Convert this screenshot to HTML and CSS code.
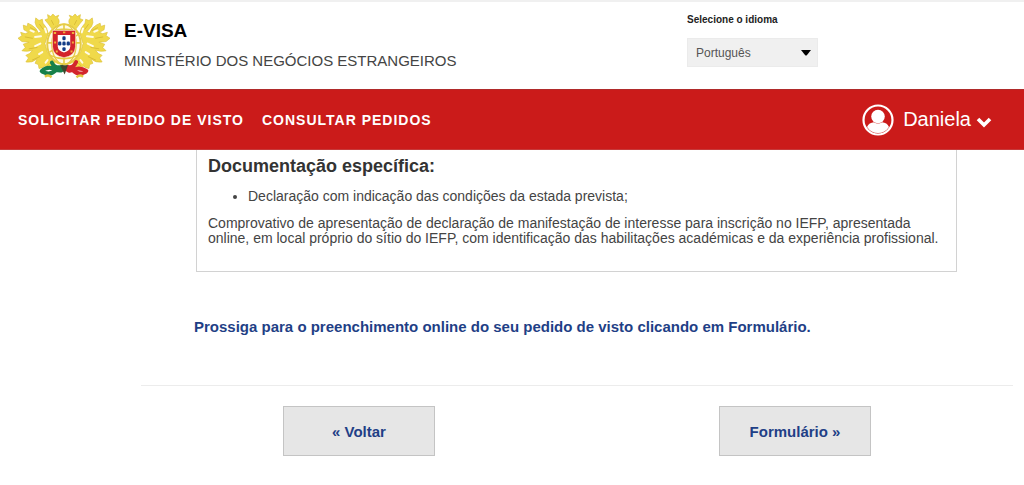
FILE: index.html
```html
<!DOCTYPE html>
<html lang="pt">
<head>
<meta charset="utf-8">
<meta name="viewport" content="width=device-width, initial-scale=1">
<title>E-VISA</title>
<link rel="stylesheet" href="styles.css">
</head>
<body>
<header class="top">
  <div class="brand">
    <svg class="emblem" viewBox="22 36 280 202" role="img" aria-label="Armas de Portugal">
      <defs>
        <g id="branch" stroke="#dcc03a" stroke-width="2" stroke-linejoin="round" stroke-linecap="round">
          <path fill="#f0d94a" d="M146 68 Q150 56 142 50 L146 42 L136 46 L128 38 L122 46 L112 40 L114 52 L104 56 L114 68 L126 84 L114 98 Q112 80 98 66 L96 54 L86 58 L76 50 L74 64 L78 76 L92 92 L84 96 Q80 82 64 72 L52 66 L50 76 L38 72 L40 86 L54 94 L44 98 L30 94 L34 104 L22 112 L34 122 L56 124 L38 130 L44 140 L34 150 Q52 154 66 148 L58 158 L46 164 L54 172 L46 184 Q66 188 80 174 L74 188 L84 192 L86 204 Q98 202 104 196 L114 206 Q126 202 134 192 L134 176 L112 156 L104 128 L114 98 L134 82 Z"/>
          <path fill="none" stroke="#fffbe6" stroke-width="6" d="M104 82 L108 94 M92 106 L74 108 M90 128 L74 136 M96 154 L86 160 M112 178 L106 186 M70 92 L60 88"/>
          <path fill="none" stroke="#cdae2c" d="M130 70 L124 58 M98 84 L88 70 M76 88 L60 80 M66 112 L44 108 M80 140 L56 144 M88 168 L66 178 M118 188 L110 196"/>
        </g>
        <g id="quina">
          <rect x="-5" y="-6" width="10" height="12" rx="4" fill="#143c86"/>
        </g>
      </defs>
      <use href="#branch"/>
      <use href="#branch" transform="translate(324 0) scale(-1 1)"/>
      <ellipse cx="162" cy="130" rx="53" ry="63" fill="#fffbe4"/>
      <g fill="none" stroke="#e6cc45" stroke-width="6">
        <ellipse cx="162" cy="130" rx="51" ry="61"/>
        <ellipse cx="162" cy="130" rx="37" ry="61" stroke-width="4"/>
        <path d="M112 126 H212 M120 94 Q162 74 204 94 M120 164 Q162 184 204 164 M162 70 V190 M118 154 L206 100" stroke-width="5"/>
      </g>
      <path d="M127 88 H197 V138 Q195 166 162 171 Q129 166 127 138 Z" fill="#d3232b" stroke="#f6d9b8" stroke-width="2"/>
      <path d="M143 102 H181 V137 Q180 151 162 155 Q144 151 143 137 Z" fill="#fff"/>
      <g fill="#efb03b">
        <path d="M131 93h7v6h-7z M159 91h7v6h-7z M186 93h7v6h-7z M132 122h6v6h-6z M186 122h6v6h-6z M137 149h6v6h-6z M182 149h6v6h-6z"/>
      </g>
      <use href="#quina" x="162" y="112"/>
      <use href="#quina" x="149" y="128"/>
      <use href="#quina" x="162" y="128"/>
      <use href="#quina" x="175" y="128"/>
      <use href="#quina" x="162" y="145"/>
      <g fill="none" stroke-width="12" stroke-linecap="round">
        <path stroke="#17804a" d="M125 186 Q132 204 156 199 M94 212 Q112 194 136 207 Q154 215 160 204 M96 214 Q120 226 136 210"/>
        <path stroke="#d3262c" d="M199 184 Q190 204 174 199 M230 211 Q210 198 190 208 Q174 216 168 202 M228 214 Q206 226 190 210"/>
      </g>
      <path d="M150 194 H174 L164 222 Z" fill="#3e472c"/>
      <path d="M104 229 q10 -8 20 2 M200 231 q10 -10 20 -2" fill="none" stroke="#e0c640" stroke-width="7"/>
    </svg>
    <div>
      <h1 class="brand-name">E-VISA</h1>
      <p class="brand-sub">MINISTÉRIO DOS NEGÓCIOS ESTRANGEIROS</p>
    </div>
  </div>
  <div class="language">
    <label class="language-label" for="idioma">Selecione o idioma</label>
    <div class="select-wrap">
      <select class="language-select" id="idioma"><option>Português</option></select>
      <svg class="select-arrow" viewBox="0 0 10 6" aria-hidden="true"><path d="M0 0H10L6 5Q5 6 4 5Z"/></svg>
    </div>
  </div>
</header>
<nav class="menu">
  <div class="menu-links">
    <a class="menu-link" href="#">SOLICITAR PEDIDO DE VISTO</a>
    <a class="menu-link" href="#">CONSULTAR PEDIDOS</a>
  </div>
  <button class="user" type="button">
    <svg class="user-icon" viewBox="0 0 32 32" aria-hidden="true">
      <circle cx="16" cy="16" r="14.500" fill="none" stroke="#fff" stroke-width="2.200"/>
      <circle cx="16" cy="12.500" r="6.800" fill="#fff"/>
      <path fill="#fff" d="M5 23Q7 18.500 12 18.200Q16 21 20 18.200Q25 18.500 27 23Q23 29 16 29T5 23Z"/>
    </svg>
    <span>Daniela</span>
    <svg class="user-arrow" viewBox="0 0 16 12" aria-hidden="true"><path d="M2 3L8 9L14 3" fill="none" stroke="#fff" stroke-width="3.600"/></svg>
  </button>
</nav>
<main class="content">
  <section class="panel">
    <h2 class="panel-title">Documentação específica:</h2>
    <ul class="panel-list"><li>Declaração com indicação das condições da estada prevista;</li></ul>
    <p class="panel-text">Comprovativo de apresentação de declaração de manifestação de interesse para inscrição no IEFP, apresentada online, em local próprio do sítio do IEFP, com identificação das habilitações académicas e da experiência profissional.</p>
  </section>
  <p class="notice">Prossiga para o preenchimento online do seu pedido de visto clicando em Formulário.</p>
  <div class="actions">
    <button class="action" type="button">« Voltar</button>
    <button class="action" type="button">Formulário »</button>
  </div>
</main>
</body>
</html>
```
FILE: styles.css
```css
* { box-sizing: border-box; }
body {
  margin: 0;
  background: #fff;
  color: #444;
  font-family: "Liberation Sans", Arial, sans-serif;
  font-size: 14px;
}
h1, h2, p, ul { margin: 0; }
.top {
  display: flex;
  justify-content: space-between;
  align-items: flex-start;
  padding: 10px 206px 8px 18px;
  border-top: 2px solid #f0f0f0;
}
.brand { display: flex; gap: 14px; }
.emblem { width: 92px; height: 69px; }
.brand-name {
  padding-top: 8px;
  color: #000;
  font-size: 19px;
  line-height: 22px;
}
.brand-sub {
  padding-top: 9px;
  font-size: 15px;
  line-height: 20px;
}
.language { width: 131px; }
.language-label {
  display: block;
  padding: 1px 0 11px;
  color: #222;
  font-size: 10px;
  font-weight: bold;
  line-height: 14px;
}
.select-wrap { position: relative; }
.language-select {
  display: block;
  width: 100%;
  height: 29px;
  padding: 0 8px;
  border: 1px solid #ebebeb;
  border-radius: 0;
  background: #f0f0f0;
  color: #555;
  font: inherit;
  font-size: 12px;
  appearance: none;
}
.select-arrow {
  position: absolute;
  right: 7px;
  top: 12px;
  width: 10px;
  height: 6px;
  pointer-events: none;
}
.menu {
  display: flex;
  justify-content: space-between;
  align-items: center;
  min-height: 61px;
  padding: 0 32px 0 18px;
  border-top: 1px solid #b02a2a;
  border-bottom: 1px solid #c63a3a;
  background: #cb1b1a;
}
.menu-links { display: flex; gap: 18px; }
.menu-link {
  color: #fff;
  font-weight: bold;
  letter-spacing: 1px;
  text-decoration: none;
}
.user {
  display: flex;
  align-items: center;
  padding: 0;
  border: 0;
  background: none;
  color: #fff;
  font: inherit;
  font-size: 20px;
}
.user-icon { width: 32px; height: 32px; margin-right: 9px; }
.user-arrow { width: 16px; height: 12px; margin: 4px 0 0 5px; }
.content { margin: 0 11px 0 141px; }
.panel {
  margin: 0 56px 0 55px;
  padding: 5px 11px 25px;
  border: 1px solid #d2d2d2;
  border-top: 0;
}
.panel-title {
  color: #333;
  font-size: 18px;
  line-height: 22px;
}
.panel-list {
  padding: 12px 0 12px 40px;
  line-height: 15px;
}
.panel-text { line-height: 15px; }
.notice {
  padding: 46px 53px 49px;
  color: #1f3f86;
  font-size: 15px;
  font-weight: bold;
  line-height: 18px;
}
.actions {
  display: grid;
  grid-template-columns: 1fr 1fr;
  justify-items: center;
  padding-top: 20px;
  border-top: 1px solid #ececec;
}
.action {
  width: 152px;
  height: 50px;
  border: 1px solid #c4c4c4;
  background: #e6e6e6;
  color: #1f3f86;
  font: inherit;
  font-size: 15px;
  font-weight: bold;
}
```
